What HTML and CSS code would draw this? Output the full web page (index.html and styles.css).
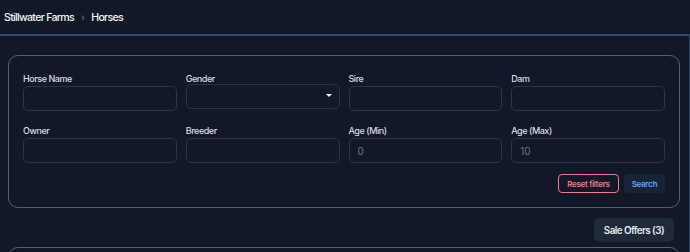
FILE: index.html
```html
<!DOCTYPE html>
<html lang="en">
	<head>
		<meta charset="UTF-8" />
		<meta name="viewport" content="width=device-width, initial-scale=1.0" />
		<title>Horses - Stillwater Farms</title>
		<link rel="stylesheet" href="styles.css">
	</head>
	<body>
		<header class="topbar">
			<nav class="crumbs">
				<span class="crumb">Stillwater Farms</span>
				<span class="crumb-sep">›</span>
				<span class="crumb current">Horses</span>
			</nav>
		</header>

		<main class="page">
			<form class="filters">
				<div class="filter-grid">
					<label class="field">
						<span class="field-label">Horse Name</span>
						<input class="field-input" type="text" />
					</label>
					<label class="field">
						<span class="field-label">Gender</span>
						<span class="select-wrap">
							<select class="field-input field-select">
								<option></option>
								<option>Mare</option>
								<option>Stallion</option>
								<option>Gelding</option>
							</select>
							<span class="caret"></span>
						</span>
					</label>
					<label class="field">
						<span class="field-label">Sire</span>
						<input class="field-input" type="text" />
					</label>
					<label class="field">
						<span class="field-label">Dam</span>
						<input class="field-input" type="text" />
					</label>
					<label class="field">
						<span class="field-label">Owner</span>
						<input class="field-input" type="text" />
					</label>
					<label class="field">
						<span class="field-label">Breeder</span>
						<input class="field-input" type="text" />
					</label>
					<label class="field">
						<span class="field-label">Age (Min)</span>
						<input class="field-input" type="number" placeholder="0" />
					</label>
					<label class="field">
						<span class="field-label">Age (Max)</span>
						<input class="field-input" type="number" placeholder="10" />
					</label>
				</div>

				<div class="filter-actions">
					<button type="reset" class="btn btn-reset">Reset filters</button>
					<button type="submit" class="btn btn-search">Search</button>
				</div>
			</form>

			<div class="toolbar">
				<button class="btn-offers">Sale Offers (3)</button>
			</div>

			<section class="results"></section>
		</main>
	</body>
</html>
```

FILE: styles.css
```css
:root {
	--bg: #111827;
	--text: #e5e7eb;
	--label: #d9dce1;
	--muted: #6b7280;
	--line: #2e4a66;
	--card-border: #5a6170;
	--input-border: #2c3443;
	--danger: #f2778f;
	--info: #60a5fa;
}

* {
	margin: 0;
	padding: 0;
	box-sizing: border-box;
}

body {
	font-family: Inter, "Noto Sans", sans-serif;
	background-color: var(--bg);
	color: var(--text);
	overflow: hidden;
}

.topbar {
	height: 36px;
	padding-left: 4px;
	display: flex;
	align-items: center;
	border-bottom: 2px solid var(--line);
}

.crumbs {
	display: flex;
	align-items: center;
	gap: 7px;
	font-size: 10.6px;
	font-weight: 500;
	letter-spacing: -0.7px;
	color: #f3f4f6;
}

.crumb-sep {
	color: var(--muted);
	font-size: 10px;
	font-weight: 400;
}

.page {
	padding: 19px 9px 0 8px;
	border-right: 1px solid var(--line);
	min-height: calc(100vh - 36px);
}

.filters {
	border: 1px solid var(--card-border);
	border-radius: 10px;
	padding: 16px 14px 14px;
}

.filter-grid {
	display: grid;
	grid-template-columns: repeat(4, 1fr);
	column-gap: 9px;
	row-gap: 13px;
}

.field {
	display: flex;
	flex-direction: column;
}

.field-label {
	font-size: 9px;
	font-weight: 500;
	line-height: 14px;
	letter-spacing: -0.45px;
	color: var(--label);
}

.field-input {
	height: 25px;
	width: 100%;
	background: transparent;
	border: 1px solid var(--input-border);
	border-radius: 5px;
	padding: 0 8px;
	font-family: inherit;
	font-size: 10px;
	color: var(--text);
	outline: none;
}

.field-input::placeholder {
	color: var(--muted);
}

.field-input::-webkit-inner-spin-button {
	-webkit-appearance: none;
}

.select-wrap {
	position: relative;
	display: block;
	margin-top: -2px;
}

.field-select {
	appearance: none;
	-webkit-appearance: none;
	display: block;
}

.caret {
	position: absolute;
	right: 8px;
	top: 10px;
	border-left: 3px solid transparent;
	border-right: 3px solid transparent;
	border-top: 3px solid #f3f4f6;
}

.filter-actions {
	display: flex;
	justify-content: flex-end;
	gap: 5px;
	margin-top: 11px;
}

.btn {
	height: 19px;
	font-family: inherit;
	font-size: 8px;
	font-weight: 600;
	letter-spacing: -0.3px;
	border-radius: 4px;
	padding: 0 8px;
	cursor: pointer;
}

.btn-reset {
	background: transparent;
	border: 1px solid var(--danger);
	color: var(--danger);
}

.btn-search {
	background: #172336;
	border: none;
	color: var(--info);
}

.toolbar {
	display: flex;
	justify-content: flex-end;
	margin: 10px 6px 5px 0;
}

.btn-offers {
	height: 24px;
	padding: 0 10px;
	background: #1f2937;
	border: none;
	border-radius: 5px;
	color: #e5e7eb;
	font-family: inherit;
	font-size: 9.8px;
	font-weight: 600;
	letter-spacing: -0.55px;
}

.results {
	height: 40px;
	border: 1px solid var(--card-border);
	border-radius: 10px;
}
```
